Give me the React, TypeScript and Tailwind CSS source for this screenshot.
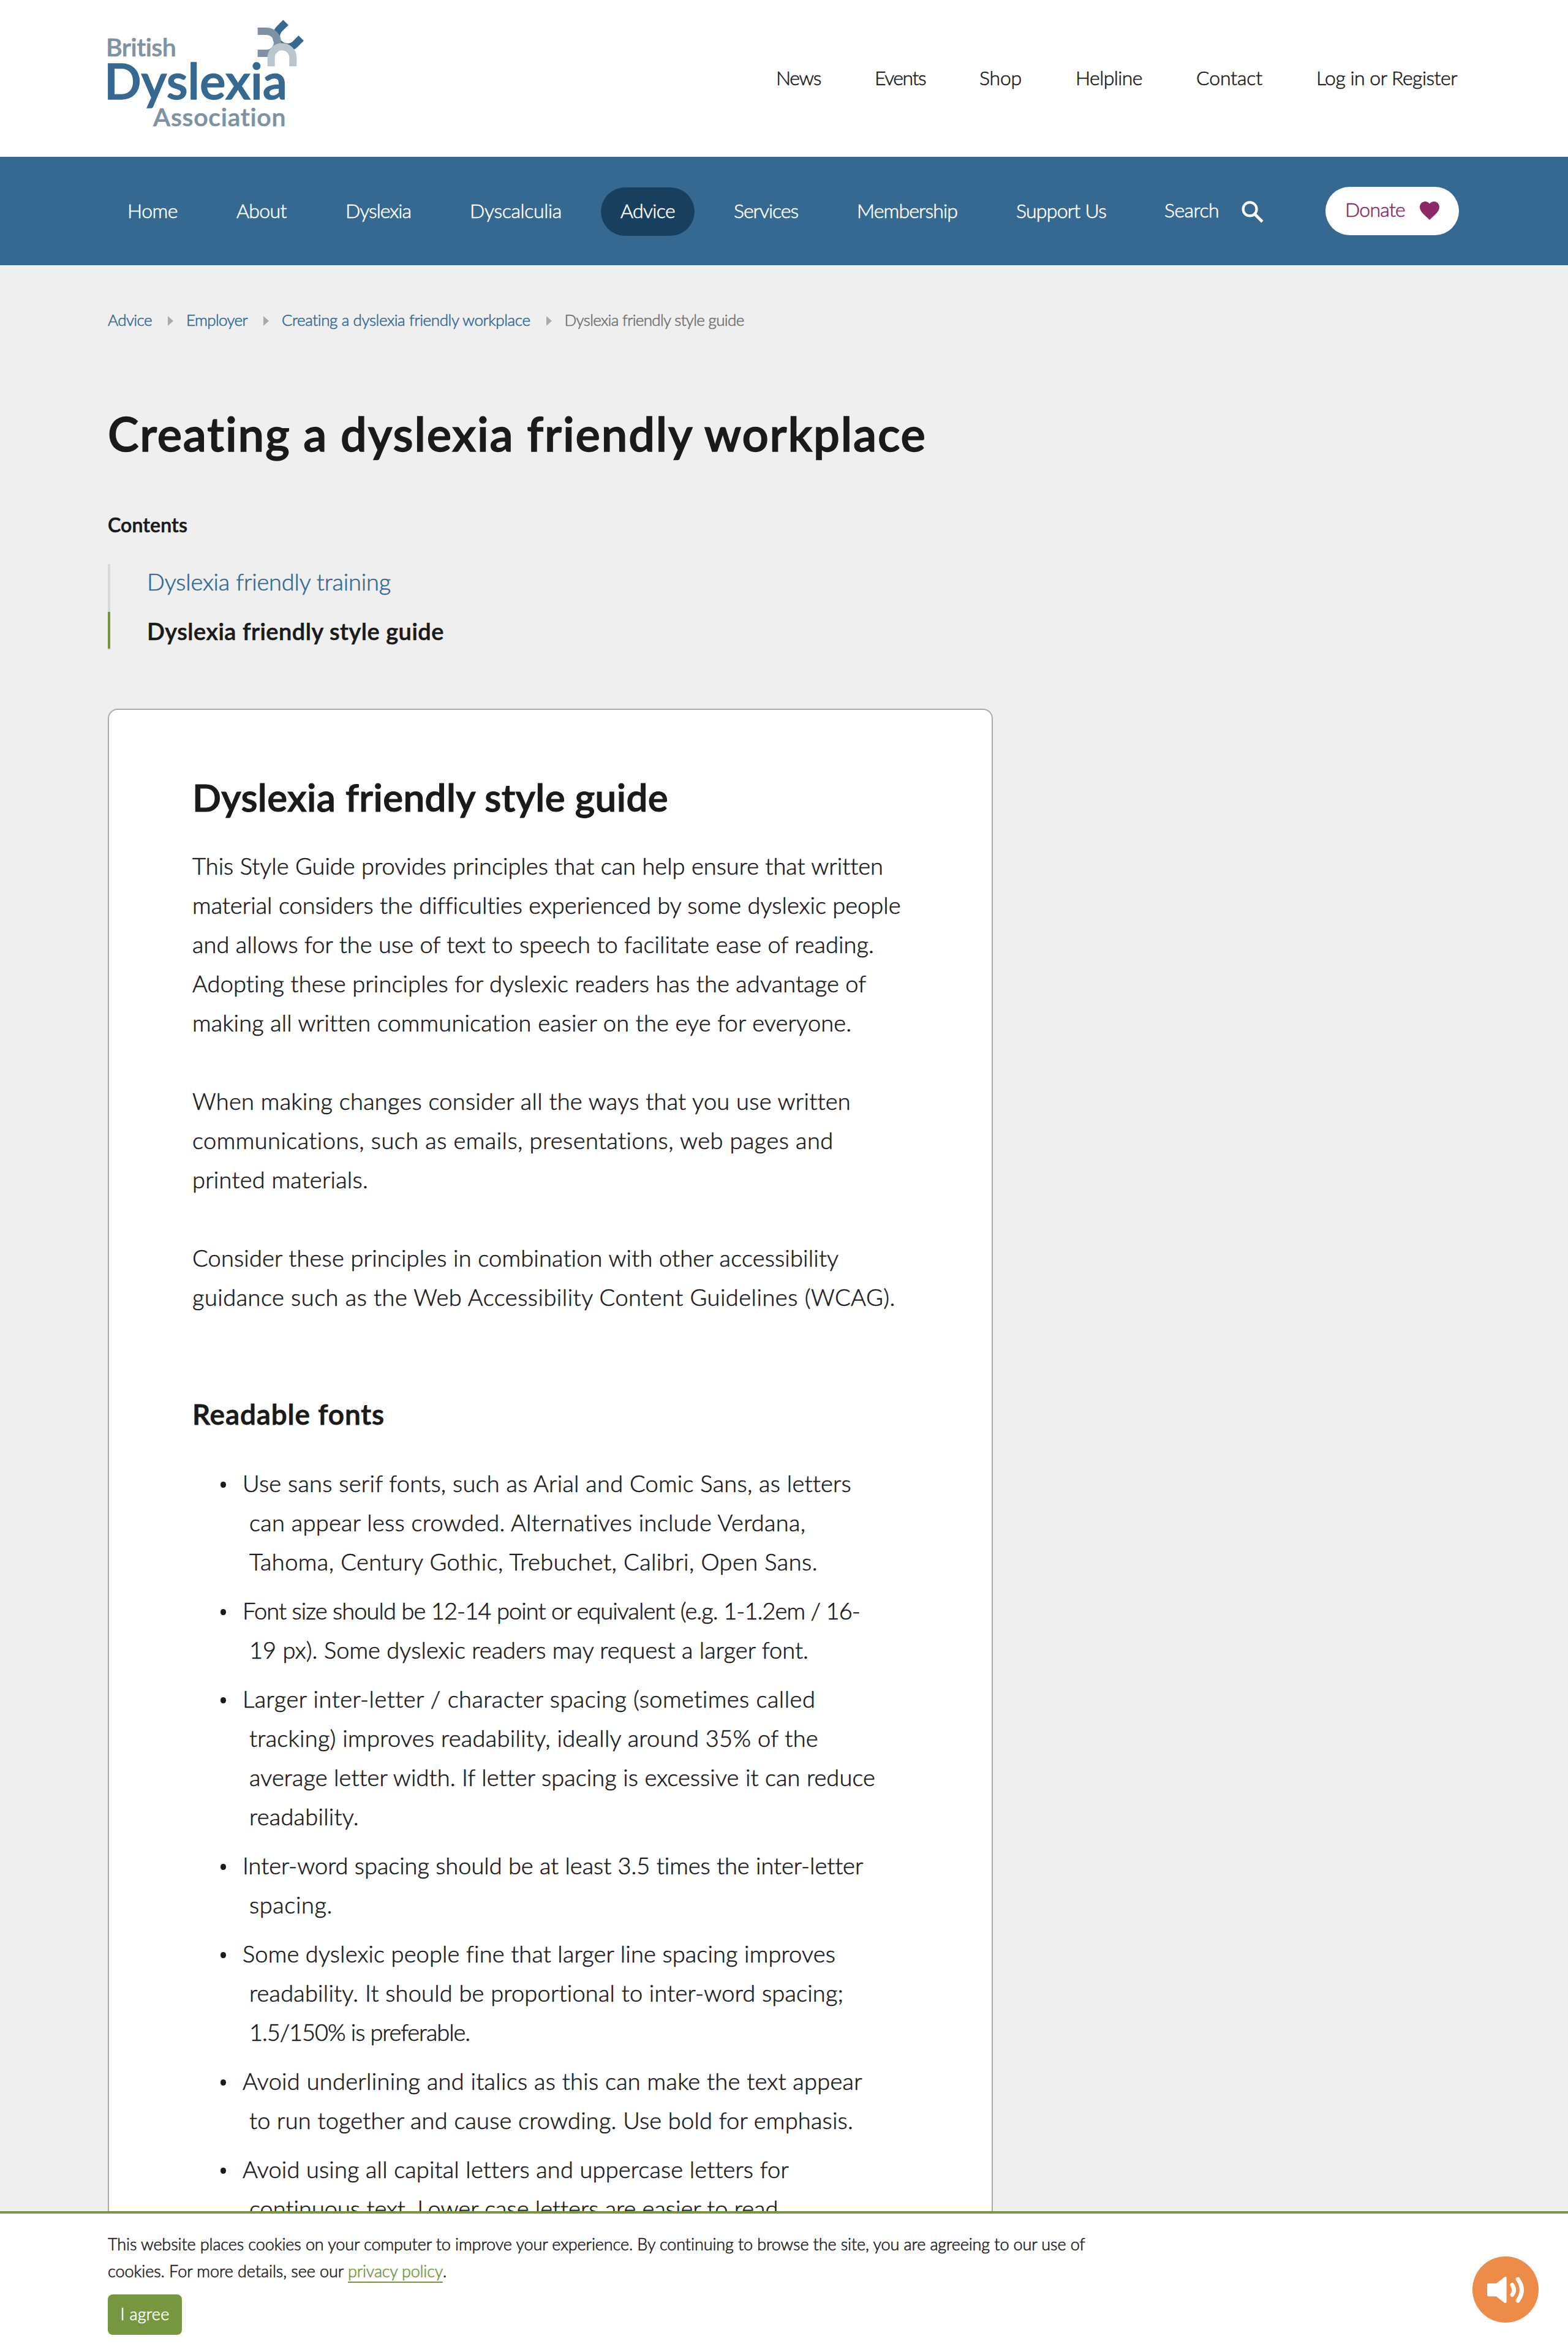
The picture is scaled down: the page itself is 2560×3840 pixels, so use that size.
import { useLayoutEffect, useRef, useState, type ReactNode } from "react";

/** A single line of text tracked so that it fills exactly `w` pixels. */
function Fit({ w, className = "", children }: { w: number; className?: string; children: string }) {
  const ref = useRef<HTMLSpanElement>(null);
  const [spacing, setSpacing] = useState(0);
  useLayoutEffect(() => {
    const el = ref.current;
    if (!el) return;
    const natural = el.getBoundingClientRect().width - spacing * children.length;
    setSpacing((w - natural) / children.length);
  }, [w, children]);
  return (
    <span ref={ref} className={`inline-block whitespace-pre ${className}`} style={{ letterSpacing: `${spacing}px` }}>
      {children}
    </span>
  );
}

type Line = [string, number];

const topLinks: Line[] = [
  ["News", 73],
  ["Events", 83],
  ["Shop", 69],
  ["Helpline", 109],
  ["Contact", 108],
  ["Log in or Register", 230],
];

const mainLinks: Line[] = [
  ["Home", 82],
  ["About", 82],
  ["Dyslexia", 107],
  ["Dyscalculia", 150],
  ["Advice", 89],
  ["Services", 105],
  ["Membership", 164],
  ["Support Us", 147],
];

const paragraphs: Line[][] = [
  [
    ["This Style Guide provides principles that can help ensure that written", 1127],
    ["material considers the difficulties experienced by some dyslexic people", 1155],
    ["and allows for the use of text to speech to facilitate ease of reading.", 1113],
    ["Adopting these principles for dyslexic readers has the advantage of", 1101],
    ["making all written communication easier on the eye for everyone.", 1076],
  ],
  [
    ["When making changes consider all the ways that you use written", 1074],
    ["communications, such as emails, presentations, web pages and", 1048],
    ["printed materials.", 287],
  ],
  [
    ["Consider these principles in combination with other accessibility", 1056],
    ["guidance such as the Web Accessibility Content Guidelines (WCAG).", 1148],
  ],
];

const items: Line[][] = [
  [
    ["Use sans serif fonts, such as Arial and Comic Sans, as letters", 993],
    ["can appear less crowded. Alternatives include Verdana,", 909],
    ["Tahoma, Century Gothic, Trebuchet, Calibri, Open Sans.", 928],
  ],
  [
    ["Font size should be 12-14 point or equivalent (e.g. 1-1.2em / 16-", 1008],
    ["19 px). Some dyslexic readers may request a larger font.", 913],
  ],
  [
    ["Larger inter-letter / character spacing (sometimes called", 935],
    ["tracking) improves readability, ideally around 35% of the", 929],
    ["average letter width. If letter spacing is excessive it can reduce", 1020],
    ["readability.", 179],
  ],
  [
    ["Inter-word spacing should be at least 3.5 times the inter-letter", 1013],
    ["spacing.", 136],
  ],
  [
    ["Some dyslexic people fine that larger line spacing improves", 967],
    ["readability. It should be proportional to inter-word spacing;", 971],
    ["1.5/150% is preferable.", 360],
  ],
  [
    ["Avoid underlining and italics as this can make the text appear", 1012],
    ["to run together and cause crowding. Use bold for emphasis.", 986],
  ],
  [
    ["Avoid using all capital letters and uppercase letters for", 890],
    ["continuous text. Lower case letters are easier to read.", 872],
  ],
];

function Logo() {
  return (
    <div className="relative flex h-[256px] w-[320px] flex-col items-start pt-[57px] font-semibold text-[#7e92a4]">
      <Fit w={115} className="-ml-[3px] text-[41px] leading-[40px]">British</Fit>
      <span className="mt-[2px] -ml-[6px] flex text-[80px] leading-[64px] text-[#356991] [-webkit-text-stroke:1.4px]">
        <Fit w={299}>Dyslexia</Fit>
      </span>
      <Fit w={218} className="mt-[8px] ml-[74px] text-[41px] leading-[40px]">Association</Fit>
      <svg className="absolute top-[32px] left-[244px] h-[77px] w-[77px]" viewBox="810 95 231 231" fill="none" strokeWidth="36">
        <path d="M950 109L921 138C896 162 898 200 924 218C946 234 975 235 994 217L1025 186" stroke="#356991" />
        <path d="M812 152H855A54 54 0 0 1 855 260H812" stroke="#7e92a4" />
        <path d="M878 324V281A53.5 53.5 0 0 1 985 281V324" stroke="#bac5ce" />
      </svg>
    </div>
  );
}

function Crumb({ w, children }: { w: number; children: string }) {
  return (
    <>
      <a className="text-[#356991]"><Fit w={w}>{children}</Fit></a>
      <svg className="mt-1 mr-[21px] ml-[26px] h-4 w-[9px]" viewBox="0 0 9 16">
        <path d="M0 0L9 8L0 16Z" fill="#aaaaaa" />
      </svg>
    </>
  );
}

function Bullet({ children }: { children: ReactNode }) {
  return (
    <li className="mb-4 flex">
      <span className="mt-[30px] mr-[27px] ml-[46px] h-[10px] w-[9px] rounded-full bg-[#1a1a1a]" />
      <div className="flex flex-col items-start">{children}</div>
    </li>
  );
}

export default function App() {
  return (
    <div className="flex h-[3840px] w-[2560px] flex-col overflow-hidden bg-[#efefef] font-[Lato,sans-serif] font-light text-[#1a1a1a] [-webkit-text-stroke:0.6px]">
      <header className="flex h-[256px] shrink-0 justify-between bg-white pr-[181px] pl-[176px]">
        <Logo />
        <nav className="mt-[95px] flex gap-[88px] text-[32px] leading-[64px]">
          {topLinks.map(([t, w]) => (
            <a key={t}><Fit w={w}>{t}</Fit></a>
          ))}
        </nav>
      </header>

      <div className="flex h-[177px] shrink-0 items-start bg-[#356991] pt-[50px] pl-[176px] text-[32px] leading-[76px] text-white">
        <nav className="flex gap-8">
          {mainLinks.map(([t, w]) => (
            <a key={t} className={`h-[79px] rounded-full px-8 ${t === "Advice" ? "bg-[#193f5f]" : ""}`}>
              <Fit w={w}>{t}</Fit>
            </a>
          ))}
        </nav>
        <div className="ml-[63px] flex leading-[73px]">
          <Fit w={89}>Search</Fit>
          <svg className="mt-[22px] ml-[37px] h-9 w-9" viewBox="0 0 36 36" fill="none" stroke="#fff" strokeWidth="4.2">
            <circle cx="13.6" cy="13.4" r="11" />
            <path d="M21 21L34 34" strokeWidth="4.6" />
          </svg>
        </div>
        <a className="-mt-px ml-[101px] flex h-[79px] w-[218px] rounded-full bg-white pl-8 leading-[73px] text-[#8a2b66]">
          <Fit w={98}>Donate</Fit>
          <svg className="mt-[24px] ml-[24px] h-[30px] w-8" viewBox="2 3 20 18.35" preserveAspectRatio="none" fill="#8a2b66">
            <path d="M12 21.35l-1.45-1.32C5.4 15.36 2 12.28 2 8.5 2 5.42 4.42 3 7.5 3c1.74 0 3.41.81 4.5 2.09C13.09 3.81 14.76 3 16.5 3 19.58 3 22 5.42 22 8.5c0 3.78-3.4 6.86-8.55 11.54L12 21.35z" />
          </svg>
        </a>
      </div>

      <main className="flex min-h-0 flex-1 flex-col items-start overflow-hidden pl-[176px]">
        <div className="mt-[69px] flex h-10 shrink-0 items-center text-[26px] leading-[40px]">
          <Crumb w={72}>Advice</Crumb>
          <Crumb w={100}>Employer</Crumb>
          <Crumb w={406}>Creating a dyslexia friendly workplace</Crumb>
          <span className="text-[#707070]"><Fit w={293}>Dyslexia friendly style guide</Fit></span>
        </div>
        <h1 className="mt-[118px] h-24 shrink-0 text-[76px] leading-[96px] font-semibold [-webkit-text-stroke:1.4px]">
          <Fit w={1338}>Creating a dyslexia friendly workplace</Fit>
        </h1>
        <p className="mt-[77px] h-12 shrink-0 text-[32px] leading-[48px] font-semibold"><Fit w={130}>Contents</Fit></p>
        <ul className="mt-[40px] flex h-[140px] shrink-0 flex-col bg-[linear-gradient(#d8dada,#d8dada)] bg-[length:4px_100%] bg-no-repeat text-[38px]">
          <li className="h-[78px] pl-[64px] leading-[56px] text-[#356991]"><Fit w={398}>Dyslexia friendly training</Fit></li>
          <li className="h-[60px] border-l-4 border-[#76973f] pl-[60px] leading-[62px] font-semibold"><Fit w={485}>Dyslexia friendly style guide</Fit></li>
        </ul>

        <article className="mt-[96px] h-[2700px] w-[1445px] shrink-0 rounded-2xl border-2 border-[#aaaaaa] bg-white px-[136px] pt-[102px] text-[38px] leading-[64px]">
          <h2 className="h-20 text-[62px] leading-[80px] font-semibold [-webkit-text-stroke:1.1px]"><Fit w={777}>Dyslexia friendly style guide</Fit></h2>
          <div className="mt-10 flex flex-col gap-16">
            {paragraphs.map((p, i) => (
              <p key={i} className="flex flex-col items-start">
                {p.map(([t, w]) => (
                  <Fit key={t} w={w}>{t}</Fit>
                ))}
              </p>
            ))}
          </div>
          <h3 className="mt-32 h-16 text-[46px] font-semibold [-webkit-text-stroke:0.9px]"><Fit w={314}>Readable fonts</Fit></h3>
          <ul className="mt-12">
            {items.map((lines, i) => (
              <Bullet key={i}>
                {lines.map(([t, w], j) => (
                  <Fit key={t} w={w} className={j > 0 ? "ml-[11px]" : ""}>{t}</Fit>
                ))}
              </Bullet>
            ))}
          </ul>
        </article>
      </main>

      <footer className="flex h-[230px] shrink-0 items-start justify-between border-t-4 border-[#76973f] bg-white pr-12 pl-[176px] text-[27px] leading-[44px]">
        <div className="flex flex-col items-start pt-[28px]">
          <Fit w={1596}>This website places cookies on your computer to improve your experience. By continuing to browse the site, you are agreeing to our use of</Fit>
          <p className="flex">
            <Fit w={392}>cookies. For more details, see our </Fit>
            <a className="text-[#76973f]"><Fit w={155} className="underline decoration-2 underline-offset-[7px] [text-decoration-skip-ink:none]">privacy policy</Fit></a>
            <span>.</span>
          </p>
          <button className="mt-[16px] h-[66px] w-[121px] rounded-lg bg-[#76973f] pb-0.5 text-white"><Fit w={80}>I agree</Fit></button>
        </div>
        <button className="mt-[70px] h-[108px] w-[108px] rounded-full bg-[#ed8b49]">
          <svg className="h-[108px] w-[108px]" viewBox="132 132 324 324" fill="#fff">
            <path d="M211 264H249L289 233Q299 228 299 238V353Q299 363 289 359L249 328H211Q204 328 204 321V271Q204 264 211 264Z" />
            <g fill="none" stroke="#fff" strokeLinecap="round">
              <path d="M327 271Q344 296 327 320" strokeWidth="20" />
              <path d="M355 244Q392 296 355 348" strokeWidth="21" />
            </g>
          </svg>
        </button>
      </footer>
    </div>
  );
}
